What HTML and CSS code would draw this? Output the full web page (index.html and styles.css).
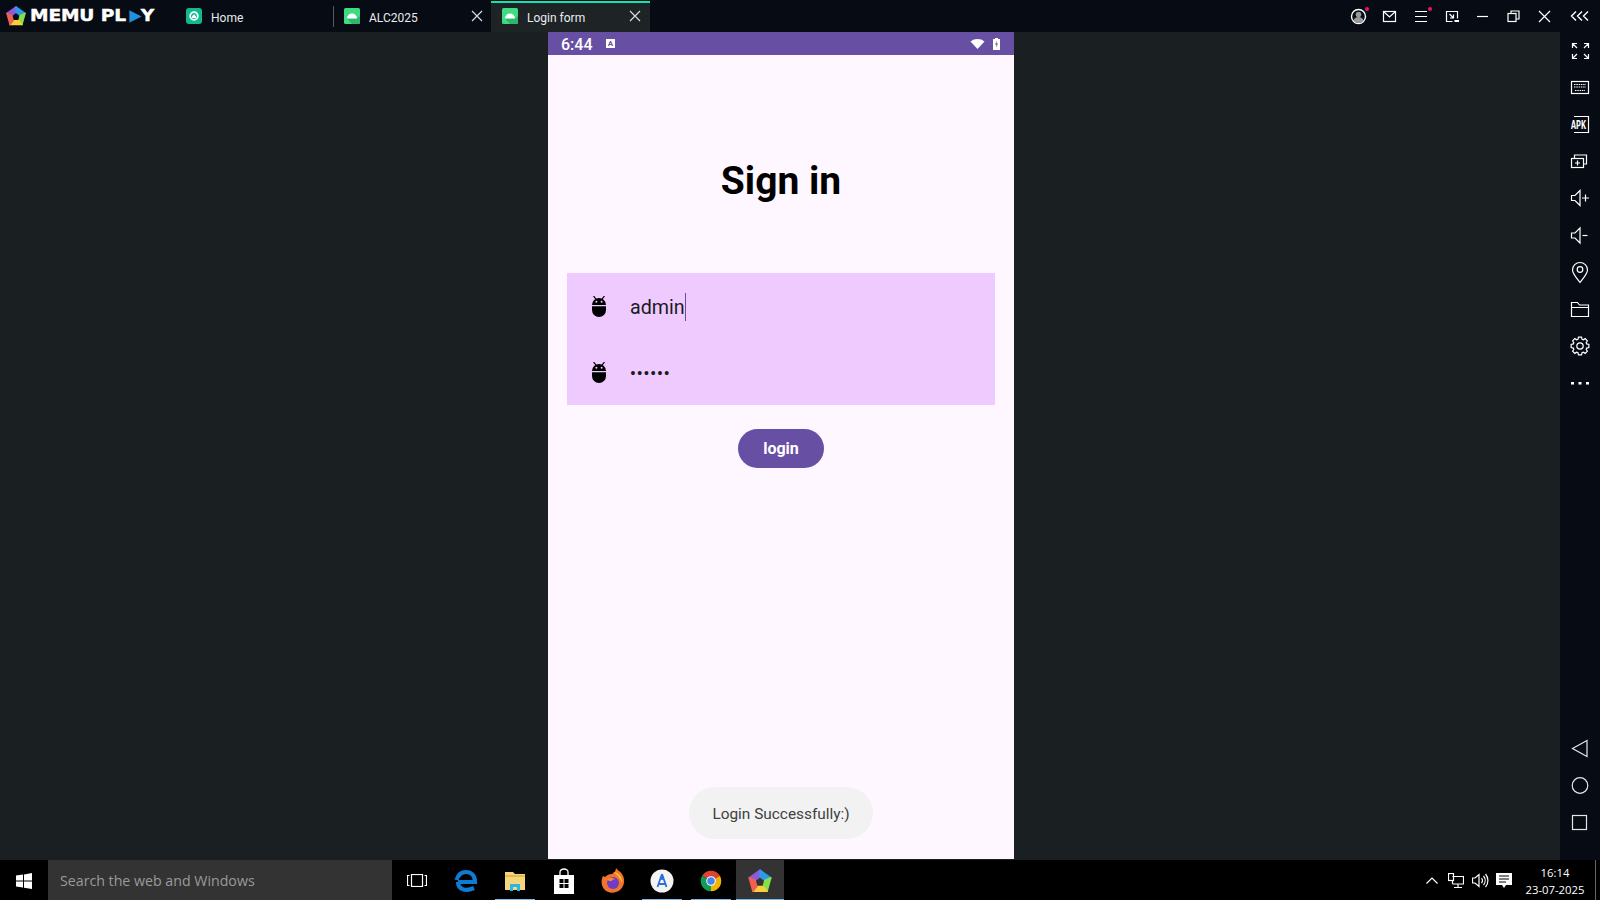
FILE: index.html
```html
<!DOCTYPE html>
<html lang="en">
<head>
<meta charset="utf-8">
<title>MEmu Play</title>
<link rel="stylesheet" href="styles.css">
</head>
<body>
<svg class="defs" width="0" height="0">
  <symbol id="memu" viewBox="0 0 24 24">
    <g stroke-linejoin="round" stroke-width="1.4">
      <path d="M2 9 12 2 12 8 7.500 11.500Z" fill="#8e5bd6" stroke="#8e5bd6"/>
      <path d="M12 2 22 9 16.500 11.500 12 8Z" fill="#2f9be8" stroke="#2f9be8"/>
      <path d="M22 9 18.500 21.500 15 17 16.500 11.500Z" fill="#86e04a" stroke="#86e04a"/>
      <path d="M18.500 21.500 5.500 21.500 9 17 15 17Z" fill="#f7cf3c" stroke="#f7cf3c"/>
      <path d="M5.500 21.500 2 9 7.500 11.500 9 17Z" fill="#f0604f" stroke="#f0604f"/>
    </g>
  </symbol>
  <symbol id="droid" viewBox="0 0 16 16">
    <rect width="16" height="16" rx="1.500" fill="#3ddc84"/>
    <path d="M8 16 3 10.500h10L16 8v6.500a1.500 1.500 0 0 1-1.500 1.500Z" fill="#2fb56c"/>
    <path d="M3 10.500a5 5 0 0 1 10 0Z" fill="#fff"/>
  </symbol>
  <symbol id="bug" viewBox="0 0 14 21">
    <path d="M1.500 0 4 3.200M12.500 0 10 3.200" stroke="#000" stroke-width="1.200" fill="none"/>
    <path d="M0 9a7 7 0 0 1 14 0Z" fill="#000"/>
    <path d="M0 10.200h14V14a7 7 0 0 1-14 0Z" fill="#000"/>
    <circle cx="4.400" cy="5.800" r="1" fill="#eecafe"/>
    <circle cx="9.600" cy="5.800" r="1" fill="#eecafe"/>
  </symbol>
</svg>

<header class="topbar">
  <div class="brand">
    <svg class="brand-mark" width="22" height="22"><use href="#memu"/></svg>
    <div class="brand-word">
      <span class="brand-name">MEMU PL</span>
      <svg class="brand-play" width="10" height="13" viewBox="0 0 11 14"><path d="M0 0 11 7 0 14Z" fill="#1f8fe0"/></svg>
      <span class="brand-name">Y</span>
    </div>
  </div>
  <div class="tab tab-home">
    <svg width="16" height="16" viewBox="0 0 16 16"><rect width="16" height="16" rx="3" fill="#12b98f"/><circle cx="8" cy="8" r="3.800" fill="none" stroke="#fff" stroke-width="1.800"/><path d="M8 6.200 10 8.200V10H6V8.200Z" fill="#fff"/></svg>
    <span class="tab-label">Home</span>
  </div>
  <div class="tab tab-sep">
    <svg width="16" height="16"><use href="#droid"/></svg>
    <span class="tab-label">ALC2025</span>
    <svg class="tab-x" width="12" height="12" viewBox="0 0 12 12"><path d="M1 1 11 11M11 1 1 11"/></svg>
  </div>
  <div class="tab tab-active">
    <svg width="16" height="16"><use href="#droid"/></svg>
    <span class="tab-label">Login form</span>
    <svg class="tab-x" width="12" height="12" viewBox="0 0 12 12"><path d="M1 1 11 11M11 1 1 11"/></svg>
  </div>
  <div class="controls">
    <svg class="ico ctl" viewBox="0 0 31 32"><circle cx="15.500" cy="16.500" r="7" stroke-width="1.400"/><circle cx="15.500" cy="14.500" r="2.800" fill="#9a9a9a" stroke="none"/><path d="M10.500 21a5 4 0 0 1 10 0 7 7 0 0 1-10 0Z" fill="#9a9a9a" stroke="none"/><circle cx="24" cy="9" r="2" fill="#f5115f" stroke="none"/></svg>
    <svg class="ico ctl" viewBox="0 0 31 32"><rect x="9.500" y="11.500" width="12" height="10"/><path d="M9.500 11.500 15.500 17l6-5.500"/></svg>
    <svg class="ico ctl" viewBox="0 0 31 32"><path d="M10 11.500h12M10 16.500h12M10 21.500h12"/><circle cx="25" cy="9" r="2" fill="#f5115f" stroke="none"/></svg>
    <svg class="ico ctl" viewBox="0 0 31 32"><path d="M21.500 18.500v-7h-11v10h6"/><path d="M13.500 14l4 4M14 18h3.500v-3.500"/><path d="M18.500 21h4.500" stroke-width="2"/></svg>
    <svg class="ico ctl" viewBox="0 0 31 32"><path d="M10 16.500h11"/></svg>
    <svg class="ico ctl" viewBox="0 0 31 32"><rect x="10" y="13.500" width="8" height="8"/><path d="M13 13.500v-2.500h8v8h-3"/></svg>
    <svg class="ico ctl" viewBox="0 0 31 32"><path d="M10 11 21 22M21 11 10 22"/></svg>
    <svg class="ico ctl-wide" viewBox="0 0 40 32"><path d="M16 11.500 11.500 16 16 20.500M22 11.500 17.500 16 22 20.500M28 11.500 23.500 16 28 20.500" stroke-width="1.400"/></svg>
  </div>
</header>

<div class="main">
  <section class="phone">
    <div class="status">
      <span class="clock">6:44</span>
      <span class="a-badge">A</span>
      <svg class="wifi" width="15" height="10" viewBox="0 0 14 10"><path d="M0 2.500C4 -.8 10 -.8 14 2.500L7 10Z" fill="#fff"/></svg>
      <svg class="batt" width="7" height="12" viewBox="0 0 7 12"><path d="M2 0h3v1h2v11H0V1h2Z" fill="#fff"/><path d="M4 2.500 2 6.500h1.500L3 10 5 5.500H3.500Z" fill="#6750a4"/></svg>
    </div>
    <div class="screen">
      <h1 class="title">Sign in</h1>
      <div class="form">
        <div class="row">
          <svg width="14" height="21"><use href="#bug"/></svg>
          <span class="value">admin</span><span class="caret"></span>
        </div>
        <div class="row">
          <svg width="14" height="21"><use href="#bug"/></svg>
          <span class="dots">••••••</span>
        </div>
      </div>
      <div class="button">login</div>
    </div>
    <div class="toast">Login Successfully:)</div>
  </section>

  <aside class="sidebar">
    <div class="side-group">
      <svg class="ico side" viewBox="0 0 40 37"><path d="M12.500 15v-4.500H17M13 11l4 4M28.500 15v-4.500H24M28 11l-4 4M12.500 21v4.500H17M13 25l4-4M28.500 21v4.500H24M28 25l-4-4"/></svg>
      <svg class="ico side" viewBox="0 0 40 37"><rect x="11.500" y="11.500" width="17" height="12"/><path d="M14 14.500h12M14 17h12M15 20.500h10" stroke-dasharray="1.500 .8"/></svg>
      <svg class="ico side" viewBox="0 0 40 37"><path d="M14 9.500h14.500v16H14"/><text x="11" y="22" class="apk" textLength="15" lengthAdjust="spacingAndGlyphs">APK</text></svg>
      <svg class="ico side" viewBox="0 0 40 37"><rect x="11.500" y="14.500" width="12" height="9"/><path d="M14.500 14.500v-3.500h12v9h-3"/><path d="M17.500 16.500v5M15 19h5"/></svg>
      <svg class="ico side" viewBox="0 0 40 37"><path d="M11.500 14.500h3.500l5-5v15l-5-5h-3.500Z"/><path d="M22 17h7M25.500 13.500v7"/></svg>
      <svg class="ico side" viewBox="0 0 40 37"><path d="M11.500 15h3.500l5-5v15l-5-5h-3.500Z"/><path d="M22.500 17.500h5"/></svg>
      <svg class="ico side" viewBox="0 0 40 37"><path d="M20 27.500C16 22.500 12.500 18.500 12.500 15a7.500 7.500 0 0 1 15 0C27.500 18.500 24 22.500 20 27.500Z"/><circle cx="20" cy="14.500" r="2.800"/></svg>
      <svg class="ico side" viewBox="0 0 40 37"><path d="M11.500 24.500v-14h6l2 2.500h9v11.500ZM11.500 15.500h17"/></svg>
      <svg class="ico side" viewBox="0 0 40 37"><g transform="translate(20 17)"><circle r="3.200"/><polygon points="6.69,-2.05 8.86,-1.56 8.86,1.56 6.69,2.05 6.18,3.29 7.37,5.16 5.16,7.37 3.29,6.18 2.05,6.69 1.56,8.86 -1.56,8.86 -2.05,6.69 -3.29,6.18 -5.16,7.37 -7.37,5.16 -6.18,3.29 -6.69,2.05 -8.86,1.56 -8.86,-1.56 -6.69,-2.05 -6.18,-3.29 -7.37,-5.16 -5.16,-7.37 -3.29,-6.18 -2.05,-6.69 -1.56,-8.86 1.56,-8.86 2.05,-6.69 3.29,-6.18 5.16,-7.37 7.37,-5.16 6.18,-3.29"/></g></svg>
      <svg class="side" viewBox="0 0 40 37"><path d="M11 16h3v2.500h-3ZM18.500 16h3v2.500h-3ZM26 16h3v2.500h-3Z" fill="#fff"/></svg>
    </div>
    <div class="side-group">
      <svg class="ico side nav" viewBox="0 0 40 37"><path d="M12.500 18.500 27 10.500v16Z"/></svg>
      <svg class="ico side nav" viewBox="0 0 40 37"><circle cx="20" cy="18.500" r="7.800"/></svg>
      <svg class="ico side nav" viewBox="0 0 40 37"><rect x="12.500" y="11.500" width="14" height="14"/></svg>
    </div>
  </aside>
</div>

<footer class="taskbar">
  <div class="start">
    <svg width="16" height="16" viewBox="0 0 16 16"><path d="M0 2.500 7 1.500V7.500H0ZM8 1.400 16 0V7.500H8ZM0 8.500H7V14.500L0 13.500ZM8 8.500H16V16L8 14.700Z" fill="#fff"/></svg>
  </div>
  <div class="search">Search the web and Windows</div>
  <div class="tb">
    <svg class="ico" width="20" height="13" viewBox="0 0 20 13"><rect x="4.500" y=".5" width="11" height="12"/><path d="M2.500 1.500H.5v10h2M17.500 1.500h2v10h-2"/></svg>
  </div>
  <div class="tb">
    <svg width="24" height="24" viewBox="0 0 24 24"><path d="M4 13H21C21 6 17 3 12 3 7 3 4 6 2.500 11M4 13C4 20 11 23 20 19" fill="none" stroke="#0c7cd5" stroke-width="4.200"/></svg>
  </div>
  <div class="tb tb-open">
    <svg width="24" height="24" viewBox="0 0 24 24"><path d="M2 3h8l2 2h10v16H2Z" fill="#f5d67b"/><path d="M2 6h20v2H2Z" fill="#e8b84a"/><path d="M7 22v-7h10v7h-3v-4h-4v4Z" fill="#2bb5ee"/></svg>
  </div>
  <div class="tb">
    <svg width="22" height="26" viewBox="0 0 22 26"><path d="M1 7h20v19H1Z" fill="#fff"/><path d="M7 7V4a4 3 0 0 1 8 0v3" fill="none" stroke="#fff" stroke-width="1.300"/><path d="M6.500 11h4v4h-4ZM11.500 11h4v4h-4ZM6.500 16h4v4h-4ZM11.500 16h4v4h-4Z" fill="#000"/></svg>
  </div>
  <div class="tb">
    <svg width="24" height="26" viewBox="0 0 24 26"><path d="M15 0c1 2 4 3 6 6 3 4 3 11-1 15-5 5-13 5-17 0C0 17 0 12 2 8l2 1c2-2 4-3 7-3 2-1 4-3 4-6Z" fill="#f3722c"/><path d="M12 4c4 0 8 3 9 8l0 3c-2-5-5-9-9-11Z" fill="#fbbf24"/><circle cx="12" cy="15" r="6" fill="#6e3cc7"/><path d="M6 12c2-3 7-3 8 0-2-1-3 0-3 1-2 0-3 0-5-1Z" fill="#f58a2e"/></svg>
  </div>
  <div class="tb tb-open">
    <svg width="24" height="24" viewBox="0 0 24 24"><circle cx="12" cy="12" r="11.500" fill="#f4f4f4"/><path d="M12 5 7.500 18M12 5l4.500 13M8.500 15h7" fill="none" stroke="#2a6fdc" stroke-width="1.800"/><circle cx="12" cy="9" r="2" fill="#2a6fdc"/></svg>
  </div>
  <div class="tb tb-open">
    <svg width="24" height="24" viewBox="0 0 28 28"><path d="M14 14 3.610 8A12 12 0 0 1 24.390 8Z" fill="#db4437"/><path d="M14 14 24.390 8A12 12 0 0 1 14 26Z" fill="#f4b400"/><path d="M14 14 14 26A12 12 0 0 1 3.610 8Z" fill="#0f9d58"/><circle cx="14" cy="14" r="5.600" fill="#fff"/><circle cx="14" cy="14" r="4.400" fill="#4285f4"/></svg>
  </div>
  <div class="tb tb-memu">
    <svg width="26" height="26"><use href="#memu"/></svg>
  </div>
  <div class="tray">
    <div class="tray-cell"><svg class="ico" width="12" height="7" viewBox="0 0 12 7"><path d="M.5 6.500 6 1l5.500 5.500"/></svg></div>
    <div class="tray-cell"><svg class="ico" width="16" height="15" viewBox="0 0 16 15"><path d="M4.500 3.500H15.500V11H4.500M4.500 8V11M10 11v3M6 14.500h8"/><rect x=".5" y=".5" width="5" height="7"/></svg></div>
    <div class="tray-cell"><svg class="ico" width="17" height="15" viewBox="0 0 17 15"><path d="M.5 5H3L7 1.500v12L3 10H.5ZM9.500 5a4 4 0 0 1 0 5M11.500 3a7 7 0 0 1 0 9M13.500 1a10 10 0 0 1 0 13"/></svg></div>
    <div class="tray-cell"><svg width="16" height="16" viewBox="0 0 16 16"><path d="M0 0H16V12H10L8 15 6 12H0Z" fill="#fff"/><path d="M3 3H13M3 6H13M3 9H10" stroke="#000" stroke-width="1"/></svg></div>
    <div class="tray-clock"><span>16:14</span><span>23-07-2025</span></div>
    <div class="show-desktop"></div>
  </div>
</footer>
</body>
</html>
```
FILE: styles.css
```css
* { box-sizing: border-box; }
html, body { margin: 0; height: 100%; }
body {
  width: 1600px;
  height: 900px;
  overflow: hidden;
  display: flex;
  flex-direction: column;
  background: #1a1f22;
  font-family: Roboto, "Liberation Sans", sans-serif;
}
.defs { display: block; height: 0; }
svg { display: block; flex: none; }
.ico { fill: none; stroke: #fff; stroke-width: 1.2; }

/* top bar */
.topbar {
  height: 32px;
  flex: none;
  display: flex;
  align-items: stretch;
  background: #060b14;
}
.brand {
  width: 170px;
  display: flex;
  align-items: center;
  padding-left: 5px;
  color: #fff;
}
.brand-mark { margin-right: 3px; }
.brand-word {
  display: flex;
  align-items: center;
  transform: scaleX(1.24);
  transform-origin: left center;
}
.brand-name {
  font-family: "DejaVu Sans", sans-serif;
  font-weight: 700;
  font-size: 15px;
  letter-spacing: -.1px;
  line-height: 32px;
  -webkit-text-stroke: .4px #fff;
}
.brand-play { margin: 0 -1px 0 3px; }
.tab {
  display: flex;
  align-items: center;
  width: 158px;
  padding-left: 11px;
  padding-right: 8px;
  color: #e8ecef;
  font-size: 12px;
}
.tab-home { width: 163px; padding-left: 16px; }
.tab-label { margin: 4px 0 0 9px; }
.tab-sep { position: relative; }
.tab-sep::before {
  content: "";
  position: absolute;
  left: 0;
  top: 6px;
  bottom: 5px;
  width: 1px;
  background: #555a5e;
}
.tab-active {
  width: 159px;
  background: #1e2326;
  border-top: 2px solid #12e3b0;
  margin-top: 1px;
  padding-bottom: 3px;
  padding-right: 9px;
}
.tab-x { margin-left: auto; fill: none; stroke: #d8dcdf; stroke-width: 1.2; }
.controls { margin-left: auto; display: flex; }
.ctl { width: 31px; height: 32px; }
.ctl-wide { width: 40px; height: 32px; }

/* main */
.main {
  height: 828px;
  flex: none;
  display: grid;
  grid-template-columns: 548px 466px 1fr 40px;
}
.phone {
  grid-column: 2;
  position: relative;
  height: 827px;
  display: flex;
  flex-direction: column;
  background: #fff7ff;
}
.status {
  height: 23px;
  flex: none;
  display: flex;
  align-items: center;
  padding: 0 14px 0 13px;
  background: #6750a4;
  color: #fff;
}
.clock { font-size: 16px; font-weight: 500; width: 45px; margin-top: 2px; }
.a-badge {
  width: 9px;
  height: 9px;
  background: #fff;
  color: #6750a4;
  font-size: 8px;
  font-weight: 700;
  line-height: 9px;
  text-align: center;
}
.wifi { margin-left: auto; }
.batt { margin-left: 8px; }
.screen {
  flex: 1;
  display: flex;
  flex-direction: column;
  align-items: center;
  padding: 0 19px;
}
.title {
  margin: 0;
  padding: 100px 0 66px;
  font-size: 39px;
  line-height: 52px;
  font-weight: 700;
  color: #000;
}
.form {
  align-self: stretch;
  background: #eecafe;
}
.row {
  height: 66px;
  display: flex;
  align-items: center;
  padding-left: 24.5px;
  color: #1c1b1f;
}
.value { margin: 2px 0 0 24.5px; font-size: 19.7px; font-weight: 400; }
.caret { width: 1.5px; height: 28px; background: #6750a4; margin-top: 1px; }
.dots { margin: 2px 0 0 24.5px; font-size: 16px; letter-spacing: 1px; font-weight: 700; }
.button {
  margin-top: 24px;
  width: 86px;
  height: 39px;
  border-radius: 20px;
  background: #6750a4;
  color: #fff;
  font-size: 16px;
  font-weight: 700;
  line-height: 39px;
  text-align: center;
}
.toast {
  position: absolute;
  left: 141px;
  top: 755px;
  width: 184px;
  height: 52px;
  border-radius: 26px;
  background: #f2f2f2;
  color: #3f3f3f;
  font-size: 15.4px;
  line-height: 54px;
  text-align: center;
}

/* sidebar */
.sidebar {
  grid-column: 4;
  display: flex;
  flex-direction: column;
  justify-content: space-between;
  padding: 1px 0 19px;
  background: #060b14;
}
.side { width: 40px; height: 37px; margin-left: -.5px; }
.apk {
  font-family: "Liberation Mono", monospace;
  font-weight: 700;
  font-size: 13px;
  fill: #fff;
  stroke: none;
}
.nav { stroke: #e6e6e6; }

/* taskbar */
.taskbar {
  flex: 1;
  display: flex;
  align-items: stretch;
  background: #000;
}
.start {
  width: 48px;
  display: flex;
  align-items: center;
  justify-content: center;
}
.search {
  width: 344px;
  padding: 1px 0 0 12px;
  background: #333;
  color: #9a9a9a;
  font-family: "Open Sans", sans-serif;
  font-size: 14.2px;
  line-height: 40px;
}
.tb {
  width: 49px;
  display: flex;
  align-items: center;
  justify-content: center;
}
.tb-open {
  background: linear-gradient(#76b9ed, #76b9ed) center bottom / 40px 2px no-repeat;
}
.tb-memu {
  width: 48px;
  margin-left: 1px;
  background: linear-gradient(#76b9ed, #76b9ed) center bottom / 48px 2px no-repeat, #333;
}
.tray { margin-left: auto; display: flex; align-items: stretch; }
.tray-cell {
  width: 24px;
  display: flex;
  align-items: center;
  justify-content: center;
}
.tray-clock {
  width: 76px;
  padding-left: 2px;
  display: flex;
  flex-direction: column;
  align-items: center;
  justify-content: center;
  color: #fff;
  font-family: "Open Sans", sans-serif;
  font-size: 11.3px;
  line-height: 17px;
}
.show-desktop {
  width: 5px;
  margin-left: 3px;
  border-left: 1px solid #666;
}
```
